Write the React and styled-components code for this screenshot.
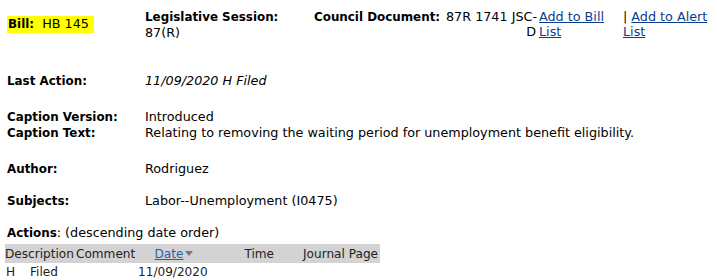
import React from "react";
import styled, { createGlobalStyle } from "styled-components";

const Global = createGlobalStyle`
  html, body { margin: 0; padding: 0; background: #fff; }
  body { font-family: Verdana, "DejaVu Sans", sans-serif; font-size: 12.75px; color: #000; }
`;

const Page = styled.div`
  padding: 9px 0 0 7px;
  width: 710px;
`;

const TopRow = styled.div`
  display: grid;
  grid-template-columns: 138px 169px 132px 93px 84px 87px;
  line-height: 15px;
  align-items: start;
`;

const Highlight = styled.span`
  display: inline-block;
  background: #ffff00;
  padding: 0 5px 1px 1px;
  line-height: 16px;
  white-space: nowrap;
`;

const Bold = styled.b`
  font-weight: bold;
  font-size: 11.9px;
`;

const Cell = styled.div`
  align-self: ${(p) => p.$valign || "start"};
  text-align: ${(p) => p.$align || "left"};
  padding-right: ${(p) => p.$pr || 0}px;
  white-space: ${(p) => (p.$nowrap ? "nowrap" : "normal")};
`;

const Link = styled.a`
  color: ${(p) => p.$color || "#0a3c8c"};
  text-decoration: underline;
  cursor: pointer;
`;

const Detail = styled.div`
  display: grid;
  grid-template-columns: 138px auto;
  line-height: 16px;
  margin-top: ${(p) => p.$mt || 0}px;
`;

const Label = styled.div`
  font-weight: bold;
  font-size: 11.9px;
`;

const Value = styled.div`
  font-style: ${(p) => (p.$italic ? "italic" : "normal")};
  white-space: nowrap;
`;

const ActionsTitle = styled.div`
  margin-top: 16px;
  line-height: 16px;
`;

const Table = styled.table`
  border-collapse: collapse;
  table-layout: fixed;
  margin-left: -2px;
  margin-top: 3px;
  width: 375px;
  color: #222;
  font-size: 12.1px;
`;

const Col = styled.col`
  width: ${(p) => p.$w}px;
`;

const HeadCell = styled.th`
  background: #d3d3d3;
  font-weight: normal;
  text-align: ${(p) => p.$align || "left"};
  padding: 2px ${(p) => p.$pr || 0}px 1px 0;
  line-height: 16px;
  white-space: nowrap;
  overflow: visible;
`;

const BodyCell = styled.td`
  padding: 1px 0 0 0;
  line-height: 16px;
  border-bottom: 1px solid #d3d3d3;
  white-space: nowrap;
  overflow: visible;
`;

const Chamber = styled.span`
  display: inline-block;
  width: 24px;
  padding-left: 1px;
`;

const Arrow = styled.span`
  display: inline-block;
  width: 0;
  height: 0;
  border-left: 4px solid transparent;
  border-right: 4px solid transparent;
  border-top: 5px solid #777;
  margin-left: 2px;
  vertical-align: 2px;
`;

export default function App() {
  return (
    <>
      <Global />
      <Page>
        <TopRow>
          <Cell $valign="center">
            <Highlight>
              <Bold>Bill:</Bold>&nbsp; HB 145
            </Highlight>
          </Cell>
          <Cell>
            <Bold>Legislative Session:</Bold>
            <br />
            87(R)
          </Cell>
          <Cell $nowrap>
            <Bold>Council Document:</Bold>
          </Cell>
          <Cell $align="right" $pr={3} $nowrap>
            87R 1741 JSC-
            <br />D
          </Cell>
          <Cell>
            <Link>Add to Bill</Link>
            <br />
            <Link>List</Link>
          </Cell>
          <Cell $nowrap>
            |&nbsp;<Link>Add to Alert</Link>
            <br />
            <Link>List</Link>
          </Cell>
        </TopRow>

        <Detail $mt={33}>
          <Label>Last Action:</Label>
          <Value $italic>11/09/2020 H Filed</Value>
        </Detail>

        <Detail $mt={20}>
          <Label>Caption Version:</Label>
          <Value>Introduced</Value>
        </Detail>
        <Detail>
          <Label>Caption Text:</Label>
          <Value>Relating to removing the waiting period for unemployment benefit eligibility.</Value>
        </Detail>

        <Detail $mt={20}>
          <Label>Author:</Label>
          <Value>Rodriguez</Value>
        </Detail>

        <Detail $mt={16}>
          <Label>Subjects:</Label>
          <Value>Labor--Unemployment (I0475)</Value>
        </Detail>

        <ActionsTitle>
          <Bold>Actions</Bold>: (descending date order)
        </ActionsTitle>
        <Table>
          <colgroup>
            <Col $w={71} />
            <Col $w={62} />
            <Col $w={80} />
            <Col $w={84} />
            <Col $w={78} />
          </colgroup>
          <thead>
            <tr>
              <HeadCell>Description</HeadCell>
              <HeadCell>Comment</HeadCell>
              <HeadCell $align="center" $pr={8}>
                <Link $color="#2a5db0">Date</Link>
                <Arrow />
              </HeadCell>
              <HeadCell $align="right" $pr={28}>Time</HeadCell>
              <HeadCell $align="right" $pr={2}>Journal Page</HeadCell>
            </tr>
          </thead>
          <tbody>
            <tr>
              <BodyCell>
                <Chamber>H</Chamber>Filed
              </BodyCell>
              <BodyCell />
              <BodyCell>11/09/2020</BodyCell>
              <BodyCell />
              <BodyCell />
            </tr>
          </tbody>
        </Table>
      </Page>
    </>
  );
}
